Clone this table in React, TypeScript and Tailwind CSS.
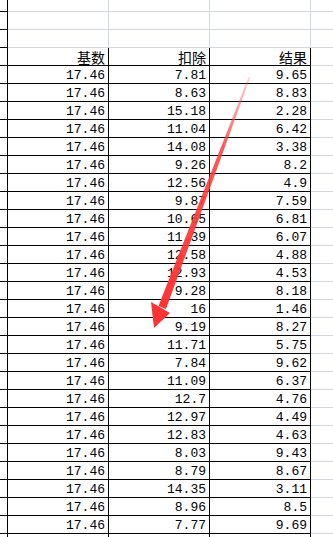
import React from "react";

const deduct = ["7.81","8.63","15.18","11.04","14.08","9.26","12.56","9.87","10.65","11.39","12.58","12.93","9.28","16","9.19","11.71","7.84","11.09","12.7","12.97","12.83","8.03","8.79","14.35","8.96","7.77"];
const result = ["9.65","8.83","2.28","6.42","3.38","8.2","4.9","7.59","6.81","6.07","4.88","4.53","8.18","1.46","8.27","5.75","9.62","6.37","4.76","4.49","4.63","9.43","8.67","3.11","8.5","9.69"];

const mono = { fontFamily: '"Liberation Mono", "DejaVu Sans Mono", monospace' };
const cjkFont = { fontFamily: '"Noto Sans CJK SC", "Noto Sans", sans-serif' };

function VLine({ dark }: { dark?: boolean }) {
  return <div className={dark ? "w-[1px] shrink-0 self-stretch bg-[#000000]" : "w-[1px] shrink-0 self-stretch bg-[#d4d8df]"} />;
}

function HLine({ dark }: { dark?: boolean }) {
  return (
    <div className="flex h-[1px]">
      <div className="w-[8px] shrink-0 bg-[#000000]" />
      <div className={dark ? "w-[303px] shrink-0 bg-[#000000]" : "w-[303px] shrink-0 bg-[#d4d8df]"} />
      <div className="flex-1 bg-[#d4d8df]" />
    </div>
  );
}

function EmptyRow({ h }: { h: string }) {
  return (
    <>
      <div className={`flex ${h}`}>
        <div className="w-[7px] shrink-0" />
        <VLine dark />
        <div className="w-[100px] shrink-0" />
        <VLine />
        <div className="w-[100px] shrink-0" />
        <VLine />
        <div className="w-[100px] shrink-0" />
        <VLine />
        <div className="flex-1" />
      </div>
      <HLine />
    </>
  );
}

function Row({ a, b, c, head }: { a: string; b: string; c: string; head?: boolean }) {
  const cls = head
    ? "w-[100px] shrink-0 text-right pr-[3px] pt-[2px] text-[14px] leading-[14px] text-[#000000]"
    : "w-[100px] shrink-0 text-right pr-[3px] pt-[4px] text-[13px] leading-[12px] text-[#000000]";
  const st = head ? cjkFont : mono;
  return (
    <>
      <div className="flex h-[17px]">
        <div className="w-[7px] shrink-0" />
        <VLine dark />
        <div className={cls} style={st}>{a}</div>
        <VLine dark />
        <div className={cls} style={st}>{b}</div>
        <VLine dark />
        <div className={cls} style={st}>{c}</div>
        <VLine dark />
        <div className="flex-1" />
      </div>
      <HLine dark />
    </>
  );
}

export default function App() {
  return (
    <div className="relative w-[333px] h-[537px] overflow-hidden bg-white">
      <EmptyRow h="h-[11px]" />
      <EmptyRow h="h-[17px]" />
      <EmptyRow h="h-[17px]" />
      <Row a="基数" b="扣除" c="结果" head />
      {deduct.map((d, i) => (
        <Row key={i} a="17.46" b={d} c={result[i]} />
      ))}
      <div className="flex h-[17px]">
        <div className="w-[7px] shrink-0" />
        <VLine dark />
        <div className="w-[100px] shrink-0" />
        <VLine dark />
        <div className="w-[100px] shrink-0" />
        <VLine dark />
        <div className="w-[100px] shrink-0" />
        <VLine dark />
        <div className="flex-1" />
      </div>

      <svg className="absolute left-0 top-0 pointer-events-none" width="333" height="537" viewBox="0 0 333 537">
        <defs>
          <linearGradient id="shaft" x1="249" y1="77" x2="160" y2="310" gradientUnits="userSpaceOnUse">
            <stop offset="0" stopColor="#ff4a4a" stopOpacity="0.25" />
            <stop offset="0.3" stopColor="#ff3a3a" stopOpacity="0.85" />
            <stop offset="1" stopColor="#ff3333" stopOpacity="1" />
          </linearGradient>
        </defs>
        <polygon points="248.6,77 250.2,77.6 166,309 158.5,306" fill="url(#shaft)" />
        <polygon points="151,302 170,313 154,328" fill="#ff3333" />
      </svg>
    </div>
  );
}
